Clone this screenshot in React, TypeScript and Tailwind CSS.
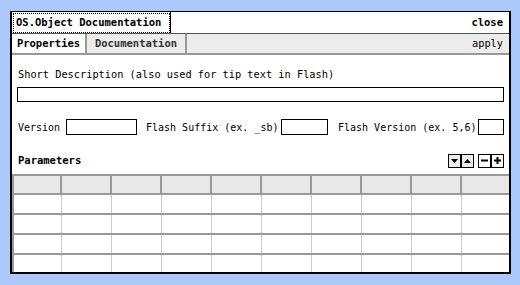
const mono = { fontFamily: '"DejaVu Sans Mono", "Liberation Mono", monospace' };

function ArrowBtn({ dir }: { dir: "up" | "down" }) {
  return (
    <div className="flex h-[14px] w-[13px] items-center justify-center border border-black bg-[#ececec]">
      <svg width="7" height="4" viewBox="0 0 7 4">
        {dir === "down" ? <polygon points="0,0 7,0 3.5,4" fill="#000" /> : <polygon points="0,4 7,4 3.5,0" fill="#000" />}
      </svg>
    </div>
  );
}

function SignBtn({ plus }: { plus?: boolean }) {
  return (
    <div className="flex h-[14px] w-[13px] items-center justify-center border border-black bg-white">
      <svg width="7" height="7" viewBox="0 0 7 7">
        <rect x="0" y="2.5" width="7" height="2" fill="#000" />
        {plus && <rect x="2.5" y="0" width="2" height="7" fill="#000" />}
      </svg>
    </div>
  );
}

export default function App() {
  const cols = Array.from({ length: 10 });
  const rows = Array.from({ length: 4 });
  return (
    <div className="h-[285px] w-[520px] bg-[#adc8fb] pl-[10px] pt-[11px] text-black" style={mono}>
      <div className="flex h-[263px] w-[501px] flex-col border-x-2 border-b-2 border-t border-black bg-white">
        {/* title bar */}
        <div className="flex h-[22px] items-stretch border-b border-[#555] bg-white">
          <div className="ml-[1px] mt-[1px] flex w-[157px] items-center whitespace-nowrap border border-dotted border-black pl-[2px] text-[10.5px] font-bold">
            OS.Object Documentation
          </div>
          <div className="flex-1 border-l border-black" />
          <div className="flex items-center pr-[6px] text-[10.5px] font-bold">close</div>
        </div>
        {/* tabs */}
        <div className="flex h-[21px] items-stretch border-b-2 border-[#999] bg-[#ececec]">
          <div className="flex w-[75px] items-center justify-center border-r-2 border-[#999] bg-white text-[10.5px] font-bold">
            Properties
          </div>
          <div className="flex w-[100px] items-center justify-center border-r-2 border-[#999] text-[10.5px] font-bold text-[#333]">
            Documentation
          </div>
          <div className="flex-1" />
          <div className="flex items-center pr-[6px] text-[10.3px]">apply</div>
        </div>
        {/* content */}
        <div className="flex flex-col whitespace-nowrap px-[5px] text-[10.3px]">
          <div className="ml-[1px] mt-[13px] leading-[12px]">Short Description (also used for tip text in Flash)</div>
          <div className="mt-[7px] h-[15px] w-[487px] border border-black" />
          <div className="ml-[1px] mt-[17px] flex items-center text-[10px]">
            <span className="w-[48px] shrink-0">Version</span>
            <div className="h-[16px] w-[71px] shrink-0 border border-black" />
            <span className="ml-[9px] w-[135px] shrink-0">Flash Suffix (ex. _sb)</span>
            <div className="h-[16px] w-[47px] shrink-0 border border-black" />
            <span className="ml-[10px] w-[140px] shrink-0">Flash Version (ex. 5,6)</span>
            <div className="h-[16px] w-[26px] shrink-0 border border-black" />
          </div>
          <div className="mt-[18px] flex items-center">
            <span className="ml-[1px] flex-1 text-[10.5px] font-bold">Parameters</span>
            <ArrowBtn dir="down" />
            <ArrowBtn dir="up" />
            <div className="w-[4px]" />
            <SignBtn />
            <SignBtn plus />
          </div>
        </div>
        {/* table */}
        <div className="mt-[5px] flex flex-1 flex-col border-l-2 border-t-2 border-[#999]">
          <div className="flex h-[19px] border-b-2 border-[#999] bg-[#e8e8e8]">
            {cols.map((_, i) => (
              <div key={i} className="h-full w-[50px] shrink-0 border-r-2 border-[#999] first:w-[48px] last:flex-1 last:border-r-0" />
            ))}
          </div>
          {rows.map((_, r) => (
            <div key={r} className="flex h-[20px] border-b-2 border-[#999] last:flex-1 last:border-b-0">
              {cols.map((_, i) => (
                <div key={i} className="h-full w-[50px] shrink-0 border-r border-[#ccc] first:w-[48px] last:flex-1 last:border-r-0" />
              ))}
            </div>
          ))}
        </div>
      </div>
    </div>
  );
}
